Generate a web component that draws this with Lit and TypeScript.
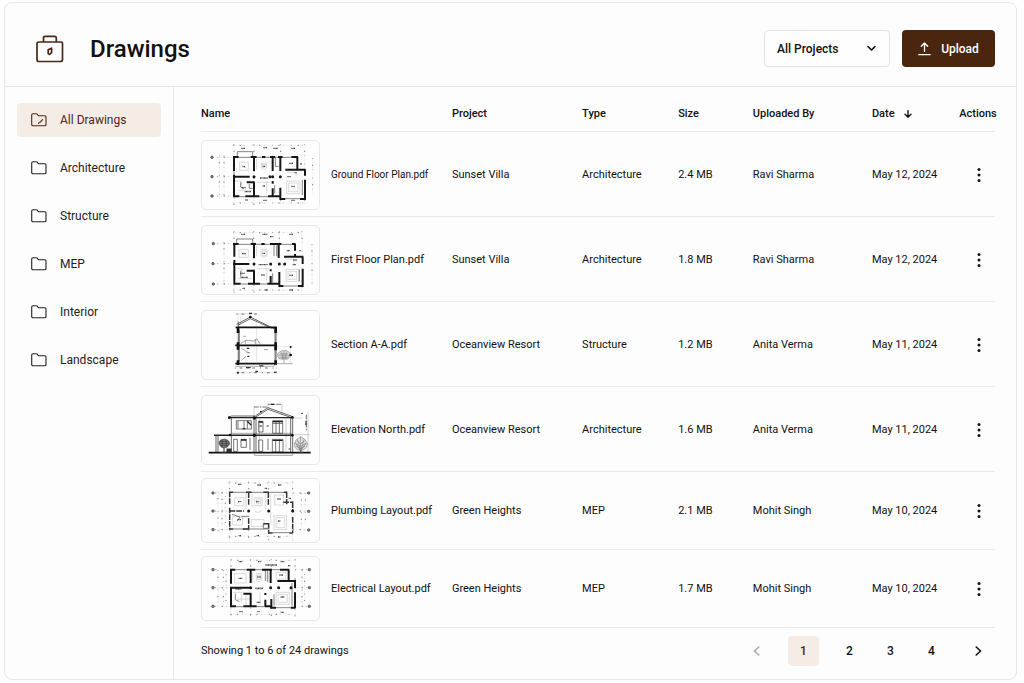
import { LitElement, html, svg, css } from "lit";
import { customElement, property, state } from "lit/decorators.js";

interface Plan {
  walls: string;
  fine: string;
  rooms: string;
  labels: string;
  guides: string;
  dots: number[][];
  marks: number[][];
  light?: boolean;
}

// Plan geometry is drawn on a 351 x 204 sheet that starts at 18,18.
const plans: Record<string, Plan> = {
  ground: {
    walls: "M111 66H128M114 63V108M114 119V187M111 125H161M111 184H130M148 184H190M164 66H182M174 66V108M174 142V186M152 142H176M198 66H208M222 66H237M230 66V108M246 66H260M253 66V108M286 66H306M304 66V107M268 104H329M327 104V122M327 134V194M330 192H312M268 192H251M253 158V194M216 184H256M230 138V146M230 160V186",
    fine: "M124 66V50H170V66M128 67H164M182 67H246M260 67H286M130 185H148M190 185H216M268 191H312M238 66V94H248M114 107V120M160 147V160H170M134 142V156L144 162M236 150V176M319 135V180",
    rooms: "M131 82H157V106H131ZM136 88L152 100M272 138H312V176H272ZM278 144H306V170H278ZM118 138H136V160M196 84H212V98Q204 108 196 98ZM199 88H209V97H199ZM270 112H300V124M182 72V104M212 140V176M183 142H222M128 166H168",
    labels: "M140 95H147M200 94H208M192 129H216M200 153H208M286 154H296M274 125H284M296 113H302M138 158H150M146 170H166M280 85H292M136 40H148M202 38H214M286 40H298M202 196H212M286 196H296M148 195H156M232 40H246M315 84V90",
    guides: "M112 31H328M112 204H328M64 67H112M64 125H112M64 183H112M84 62V190M70 62V190M114 28V62M174 28V62M254 28V62M326 28V100M114 188V210M174 188V210M254 196V210M326 196V210M350 70V182M174 108V142",
    dots: [[174, 125], [230, 125], [253, 125], [222, 125]],
    marks: [[48, 67], [48, 125], [48, 183]],
  },
  first: {
    walls: "M111 72H128M115 70V110M115 120V194M111 132H160M113 191H134M156 191H192M164 72H180M174 72V114M174 152V193M152 152H176M196 72H206M222 72H256M248 72V114M288 72H299M297 72V92M297 102V110M264 110H322M320 110V132M320 146V200M322 198H306M262 198H247M250 156V200M214 191H252M224 148V154M224 168V193",
    fine: "M122 72V57H170V72M128 73H164M180 73H222M256 73H288M134 192H156M192 192H214M262 198H306M234 72V108M242 76V108M134 152V170M230 160V188M310 148V184",
    rooms: "M129 88H157V112H129ZM135 92L150 108M270 148H308V184H270ZM276 154H302V178H276ZM118 146H138V176M195 88H213V108Q204 116 195 108ZM199 92H210V106H199ZM268 118H294V132M182 78V108M212 144V180M184 146H220M128 176H168",
    labels: "M138 101H149M200 100H208M188 134H216M196 165H206M280 166H292M272 92H282M290 134H300M132 160H146M134 172H156M136 43H148M200 43H214M280 43H292M206 210H216M280 210H292M140 205H148M222 50H232M310 92H315M292 120H302",
    guides: "M112 38H320M112 210H320M64 71H112M64 131H112M64 192H112M84 66V196M114 34V70M173 34V70M250 34V70M318 34V108M114 196V218M174 196V218M250 200V218M318 200V218M348 72V196M174 114V152",
    dots: [[174, 132], [224, 132], [250, 132], [266, 132]],
    marks: [[52, 71], [51, 131], [52, 192]],
  },
  plumbing: {
    walls: "M99 58H112M101 56V94M101 104V170M101 114H144M99 168H112M140 168H160M150 58H168M158 58V96M158 136V170M202 58H218M217 58V96M264 58H274M272 58V94M262 88H292M290 88V118M290 132V180M290 180H280M230 180H216M218 150V180M202 152H218",
    fine: "M112 58H264M112 168H216M230 179H280M136 130H160M202 152V166H216M108 124L132 132L124 144",
    rooms: "M116 74H144V98H116ZM176 74H198V98H176ZM182 78H194V92H182ZM236 66H262V96H236ZM234 128H272V170H234ZM240 134H266V164H240ZM110 130H140V156H110ZM174 112Q186 124 198 112M166 140H204V160H166ZM208 62V110M168 62V104M150 60V108M224 62V150",
    labels: "M126 86H136M180 86H190M124 140H136M246 144H254M244 78H254M126 34H136M184 36H196M246 36H256M128 188H136M182 188H190M246 192H254M206 46H214M278 76H286",
    guides: "M98 30H290M98 190H290M58 60H98M58 114H98M58 170H98M66 56V176M78 58V170M88 70V150M101 26V56M158 26V56M218 26V56M290 26V86M101 172V202M158 172V202M218 180V202M290 182V202M316 60V168M328 60V150M292 60H338M292 114H338M292 170H338",
    dots: [[158, 114], [218, 114], [290, 114]],
    marks: [[51, 60], [51, 114], [51, 170], [338, 60], [338, 115], [338, 171]],
    light: true,
  },
  electrical: {
    walls: "M102 56H118M105 54V98M105 108V168M102 110H162M102 166H120M142 166H182M152 56H178M164 56V96M164 126V168M142 128H166M198 56H228M224 56V96M252 56H280M278 56V92M244 90H298M297 86V112M297 124V172M298 170H284M240 170H222M226 144V172M206 166H228M208 126V132M208 146V166",
    fine: "M118 56H152M178 56H198M228 56H252M120 167H142M182 167H206M240 170H284M208 56V90M214 60V92M118 128V146L130 152M234 130V164M288 96V164",
    rooms: "M116 68H150V96H116ZM181 68H197V88Q189 98 181 88ZM185 72H193V86H185ZM240 124H280V160H240ZM246 130H274V154H246ZM110 124H136V154M176 110H204M180 116H200M240 64H270V84H240ZM170 62V94M218 62V94M150 132V162M192 124V160M124 144H160",
    labels: "M128 82H140M184 78H194M178 112H202M254 138H266M250 72H262M118 114H136M128 32H140M186 32H196M254 32H266M130 182H140M184 182H192M254 184H264M208 42H244M276 44H284M182 154H194",
    guides: "M104 28H298M104 190H298M58 56H100M58 110H100M58 166H100M66 58V168M82 58V168M90 70V150M105 24V54M164 24V54M226 24V54M297 24V84M105 170V196M164 170V196M226 172V196M297 174V196M318 58V166M326 70V150M298 56H340M298 110H340M298 166H340",
    dots: [[164, 110], [224, 110], [248, 110], [285, 110]],
    marks: [[51, 56], [51, 110], [51, 166], [340, 56], [340, 110], [340, 166]],
  },
};

const drawPlan = (p: Plan) => svg`
  <g fill="none" stroke="#222">
    <path d=${p.guides} stroke="#ddd" stroke-width="1"/>
    <path d=${p.guides} stroke="#666" stroke-width="2.4" stroke-dasharray="2 17 4 11 1 23"/>
    <path d=${p.rooms} stroke="#bbb" stroke-width="1.6"/>
    <path d=${p.fine} stroke="#555" stroke-width="2.2"/>
    <path d=${p.labels} stroke="#444" stroke-width="4" stroke-dasharray="3 1"/>
    <path d=${p.walls} stroke=${p.light ? "#333" : "#161616"} stroke-width=${p.light ? 4.5 : 6} stroke-dasharray=${p.light ? "17 3" : "none"}/>
  </g>
  ${p.dots.map(([x, y]) => svg`<circle cx=${x} cy=${y} r="4.5" fill="#161616"/>`)}
  ${p.marks.map(([x, y]) => svg`<circle cx=${x} cy=${y} r="4" fill="#777" stroke="#444" stroke-width="1.6"/>`)}`;

const drawSection = () => svg`
  <g fill="none" stroke="#222">
    <path d="M126 24V204M240 50V204M120 27H182M116 203H244M182 40V170M242 125H290M284 122V178M134 34V58" stroke="#c8c8c8" stroke-width="1.4"/>
    <path d="M122 27H186M122 203H244M116 189H240" stroke="#555" stroke-width="2.5" stroke-dasharray="3 12 8 15"/>
    <path d="M122 58L163 36L236 72M127 60L163 41L228 70" stroke="#444" stroke-width="2.4"/>
    <path d="M127 50V176M130 74V170M237 72V176M240 76V170" stroke="#333" stroke-width="2"/>
    <path d="M119 67H242M118 121H242M118 176H242" stroke="#111" stroke-width="5"/>
    <path d="M126 66V84M126 112V134M239 66V84M239 112V136M126 166V180M239 166V180" stroke="#111" stroke-width="8"/>
    <path d="M134 116L150 106L176 108L182 101L192 116M142 94H150M136 166L150 154M136 130L160 144M152 143H162M204 134H216M148 107V116M178 102V118" stroke="#777" stroke-width="2"/>
    <path d="M150 188H164M190 183H202M178 199H186M234 202H242M159 25H168M152 130H160M154 154H160" stroke="#333" stroke-width="4"/>
    <path d="M118 184H234L242 176H290" stroke="#888" stroke-width="2"/>
    <path d="M243 151Q250 137 265 136Q281 138 284 149L276 162H250Z" fill="#ddd" stroke="#888" stroke-width="2"/>
    <path d="M264 138V175M256 142L262 162M272 142L266 162M246 151H282M250 157H278M252 146H276M259 148V164M270 148V164" stroke="#888" stroke-width="1.8"/>
  </g>
  <g fill="#111"><circle cx="163" cy="36" r="4"/><circle cx="284" cy="150" r="4"/><circle cx="284" cy="126" r="3"/><circle cx="126" cy="203" r="3"/></g>`;

const drawElevation = () => svg`
  <g fill="none" stroke="#333">
    <path d="M174 50V84M216 40V60M258 42V74M336 68V186M290 134H342M290 84H320M190 84V186M270 84V186" stroke="#aaa" stroke-width="1.6"/>
    <path d="M174 51H216M216 43H258M331 74V122" stroke="#555" stroke-width="2.4" stroke-dasharray="14 3 5 3"/>
    <path d="M98 82L107 78H178L216 53L290 80M178 82L216 58L284 82" stroke-width="2.2"/>
    <path d="M98 83H292" stroke="#222" stroke-width="4"/>
    <path d="M54 136H176M174 136H292" stroke="#222" stroke-width="4.5"/>
    <path d="M106 130H290" stroke="#777" stroke-width="2"/>
    <path d="M106 84V186M174 84V186M180 84V186M284 84V186M290 84V186M60 138V186M66 138V186" stroke-width="2.2"/>
    <path d="M121 92H166V117H121ZM126 94V116M144 94V116M154 94V116M188 94H201V126H188ZM230 92H260V130H230ZM240 92V130M250 92V130M230 100H260M113 148H124V184H113ZM135 148H151V172H135ZM188 150H200V184H188ZM229 148H261V186H229ZM239 148V186M250 148V186M162 144V180M216 146V180" stroke="#444" stroke-width="2.2"/>
    <path d="M230 95H260M230 151H260M135 150H151M188 96H201M154 94L166 106" stroke="#222" stroke-width="4"/>
    <path d="M190 108H198M212 108H218M140 116H148M330 94V106M225 43H234M192 65H198M316 70H320M278 177H282" stroke="#222" stroke-width="3.5"/>
    <path d="M38 188H344" stroke="#111" stroke-width="5"/>
    <path d="M176 190V196H290V190" stroke="#777" stroke-width="2"/>
    <path d="M84 160V187M76 187H92M314 150V187M306 187H324" stroke="#333" stroke-width="3"/>
    <path d="M69 158Q70 149 84 147Q99 149 101 160Q99 172 84 174Q70 171 69 158Z" fill="#777" stroke="#444" stroke-width="2"/>
    <path d="M71 154H99M70 160H100M73 166H97M78 150V172M91 150V172" stroke="#333" stroke-width="1.6"/>
    <path d="M314 140Q328 146 334 160Q334 174 321 180H306Q294 174 295 160Q300 146 314 140Z" fill="#e0e0e0" stroke="#888" stroke-width="2"/>
    <path d="M314 184L298 158M314 184L304 148M314 184V142M314 184L324 148M314 184L331 158M300 168L314 176L328 168M298 160L314 170L330 160M303 152L314 162L326 152" stroke="#777" stroke-width="1.8"/>
    <path d="M92 176H106V187H92Z" fill="#333"/>
  </g>
  <g fill="#111"><circle cx="100" cy="83" r="4"/><circle cx="175" cy="84" r="5"/><circle cx="289" cy="82" r="4"/><circle cx="102" cy="135" r="4"/><circle cx="175" cy="136" r="5"/><circle cx="289" cy="136" r="4"/></g>`;

@customElement("drawing-thumb")
class DrawingThumb extends LitElement {
  @property() kind = "ground";

  static styles = css`
    :host {
      display: block;
      box-sizing: border-box;
      border: 1px solid #e8e8e8;
      border-radius: 5px;
      background: #fefefe;
      overflow: hidden;
    }
    svg { display: block; width: 100%; height: 100%; }
  `;

  render() {
    const art =
      this.kind === "section" ? drawSection()
      : this.kind === "elevation" ? drawElevation()
      : drawPlan(plans[this.kind]);
    const short = this.kind === "plumbing" || this.kind === "electrical";
    return html`<svg viewBox=${short ? "18 18 351 189" : "18 18 351 204"} aria-hidden="true">${art}</svg>`;
  }
}

interface Drawing {
  name: string;
  project: string;
  type: string;
  size: string;
  by: string;
  date: string;
  kind: string;
  compact?: boolean;
  smallName?: boolean;
}

const drawings: Drawing[] = [
  { name: "Ground Floor Plan.pdf", project: "Sunset Villa", type: "Architecture", size: "2.4 MB", by: "Ravi Sharma", date: "May 12, 2024", kind: "ground", smallName: true },
  { name: "First Floor Plan.pdf", project: "Sunset Villa", type: "Architecture", size: "1.8 MB", by: "Ravi Sharma", date: "May 12, 2024", kind: "first" },
  { name: "Section A-A.pdf", project: "Oceanview Resort", type: "Structure", size: "1.2 MB", by: "Anita Verma", date: "May 11, 2024", kind: "section" },
  { name: "Elevation North.pdf", project: "Oceanview Resort", type: "Architecture", size: "1.6 MB", by: "Anita Verma", date: "May 11, 2024", kind: "elevation" },
  { name: "Plumbing Layout.pdf", project: "Green Heights", type: "MEP", size: "2.1 MB", by: "Mohit Singh", date: "May 10, 2024", kind: "plumbing", compact: true },
  { name: "Electrical Layout.pdf", project: "Green Heights", type: "MEP", size: "1.7 MB", by: "Mohit Singh", date: "May 10, 2024", kind: "electrical", compact: true },
];

const folders = ["All Drawings", "Architecture", "Structure", "MEP", "Interior", "Landscape"];

const folderIcon = (marked: boolean) => html`
  <svg class="folder" viewBox="0 0 16 14" aria-hidden="true">
    <path d="M.7 2V11.4Q.7 12.7 2 12.7H13.8Q15 12.7 15 11.4V4Q15 2.8 13.8 2.8H7.6L6.2 1.2Q5.8.8 5.2.8H2Q.7.8.7 2Z" />
    ${marked ? svg`<path d="M7.6 10.6L8.2 9.2M9.2 9.2L11.6 6.6"/>` : ""}
  </svg>`;

@customElement("app-root")
class AppRoot extends LitElement {
  @state() private folder = "All Drawings";
  @state() private page = 1;

  static styles = css`
    :host {
      display: block;
      box-sizing: border-box;
      min-height: 100vh;
      padding: 2px 7px 3px 4px;
      background: #fefefe;
      color: #111;
      font: 400 11px/16px Roboto, sans-serif;
    }
    * { box-sizing: border-box; }
    button, select { font: inherit; color: inherit; cursor: pointer; }
    button { border: 0; background: none; padding: 0; }
    svg { fill: none; stroke: currentColor; stroke-linecap: round; stroke-linejoin: round; flex: none; }
    .card {
      display: flex;
      flex-direction: column;
      min-height: calc(100vh - 5px);
      border: 1px solid #e8e8e8;
      border-radius: 8px;
      background: #fdfdfd;
    }
    .top {
      display: flex;
      align-items: center;
      height: 84px;
      padding: 8px 21px 0 31px;
      border-bottom: 1px solid #e6e6e6;
    }
    .logo { width: 28px; height: 28px; color: #4a2815; stroke-width: 1.7; }
    h1 { margin: 0 auto 0 26px; font-size: 24px; line-height: 28px; font-weight: 500; }
    .picker { position: relative; display: flex; margin-right: 12px; }
    .picker select {
      appearance: none;
      width: 126px;
      height: 37px;
      padding: 0 32px 0 12px;
      border: 1px solid #e2e2e2;
      border-radius: 4px;
      background: #fefefe;
      font-size: 12px;
      font-weight: 500;
    }
    .picker svg { position: absolute; right: 14px; top: 15px; width: 9px; height: 7px; stroke-width: 1.6; pointer-events: none; }
    .upload {
      display: flex;
      align-items: center;
      justify-content: center;
      gap: 10px;
      width: 93px;
      height: 37px;
      border-radius: 4px;
      background: #4a260f;
      color: #fff;
      font-size: 12px;
      font-weight: 500;
    }
    .upload svg { width: 13px; height: 14px; stroke-width: 1.3; }
    .body { display: flex; flex: 1; }
    nav {
      display: flex;
      flex-direction: column;
      gap: 14px;
      width: 169px;
      flex: none;
      padding: 16px 12px;
      border-right: 1px solid #e8e8e8;
    }
    nav a {
      display: flex;
      align-items: center;
      gap: 13px;
      height: 34px;
      padding: 0 14px;
      border-radius: 4px;
      color: #222;
      font-size: 12px;
      text-decoration: none;
    }
    nav a.current { background: #f6ece6; color: #4a2815; }
    .folder { width: 16px; height: 14px; stroke-width: 1.1; }
    main { flex: 1; min-width: 0; padding: 0 21px 0 27px; }
    table { width: 100%; border-collapse: separate; border-spacing: 0; table-layout: fixed; }
    th, td { padding: 0; text-align: left; white-space: nowrap; border-bottom: 1px solid #ebebeb; }
    th { height: 45px; padding-top: 9px; font-weight: 500; }
    td { height: 85px; padding-top: 1px; }
    .compact td { height: 78px; padding-top: 0; }
    .c-name { width: 31.6%; }
    .c-project { width: 16.4%; }
    .c-type { width: 12.1%; }
    .c-size { width: 9.4%; }
    .c-by { width: 15%; }
    .c-date { width: 11%; }
    .file { display: flex; align-items: center; gap: 11px; }
    .small { font-size: 10px; }
    drawing-thumb { width: 119px; height: 70px; flex: none; }
    .compact drawing-thumb { height: 65px; }
    .sort { display: flex; align-items: center; gap: 9px; }
    .sort svg { width: 8px; height: 8px; stroke-width: 1.4; }
    .more { display: block; width: 16px; height: 20px; margin-left: 12px; }
    .more svg { display: block; width: 16px; height: 20px; fill: #111; stroke: none; }
    .foot { display: flex; align-items: center; justify-content: space-between; height: 46px; }
    .pages { display: flex; align-items: center; gap: 10px; font-size: 12px; font-weight: 500; }
    .pages button { display: flex; align-items: center; justify-content: center; width: 31px; height: 30px; border-radius: 4px; }
    .pages button.current { background: #f6ece6; color: #4a2815; }
    .pages svg { width: 7px; height: 10px; stroke-width: 1.6; }
    .pages .prev { margin-right: 6px; color: #aaa; }
    .pages .prev + button { margin-right: 5px; }
    .pages .next { margin: 0 1px 0 6px; }
  `;

  render() {
    return html`
      <div class="card">
        <header class="top">
          <svg class="logo" viewBox="0 0 28 28" aria-hidden="true">
            <path d="M3 7H25Q26.5 7 26.5 8.5V24.5Q26.5 26.5 24.5 26.5H3Q1 26.5 1 24.5V8.5Q1 7 3 7ZM7.5 7V3Q7.5 1.3 9.2 1.3H18.6Q20.3 1.3 20.3 3V7" />
            <path d="M12.2 14.8L15.6 13.2V17.6L13.6 19.4L12.2 18.6Z" />
          </svg>
          <h1>Drawings</h1>
          <div class="picker">
            <select aria-label="Project"><option>All Projects</option><option>Sunset Villa</option><option>Oceanview Resort</option><option>Green Heights</option></select>
            <svg viewBox="0 0 9 7" aria-hidden="true"><path d="M1 1.5L4.5 5L8 1.5" /></svg>
          </div>
          <button class="upload">
            <svg viewBox="0 0 13 14" aria-hidden="true"><path d="M6.5 9.4V1.2M3.3 4.2L6.5 1L9.7 4.2M.8 12.7H12.2" /></svg>
            Upload
          </button>
        </header>
        <div class="body">
          <nav aria-label="Folders">
            ${folders.map((f) => html`
              <a href="#" class=${f === this.folder ? "current" : ""} @click=${(e: Event) => { e.preventDefault(); this.folder = f; }}>
                ${folderIcon(f === "All Drawings")}<span>${f}</span>
              </a>`)}
          </nav>
          <main>
            <table>
              <thead>
                <tr>
                  <th class="c-name">Name</th>
                  <th class="c-project">Project</th>
                  <th class="c-type">Type</th>
                  <th class="c-size">Size</th>
                  <th class="c-by">Uploaded By</th>
                  <th class="c-date">
                    <button class="sort">Date <svg viewBox="0 0 8 8" aria-hidden="true"><path d="M4 .8V7.2M1 4.3L4 7.3L7 4.3" /></svg></button>
                  </th>
                  <th>Actions</th>
                </tr>
              </thead>
              <tbody>
                ${drawings.map((d) => html`
                  <tr class=${d.compact ? "compact" : ""}>
                    <td><div class="file"><drawing-thumb kind=${d.kind}></drawing-thumb><span class=${d.smallName ? "small" : ""}>${d.name}</span></div></td>
                    <td>${d.project}</td>
                    <td>${d.type}</td>
                    <td>${d.size}</td>
                    <td>${d.by}</td>
                    <td>${d.date}</td>
                    <td>
                      <button class="more" aria-label="Actions for ${d.name}">
                        <svg viewBox="0 0 16 20"><circle cx="8" cy="4.5" r="1.5"/><circle cx="8" cy="10" r="1.5"/><circle cx="8" cy="15.5" r="1.5"/></svg>
                      </button>
                    </td>
                  </tr>`)}
              </tbody>
            </table>
            <div class="foot">
              <span>Showing 1 to 6 of 24 drawings</span>
              <div class="pages">
                <button class="prev" aria-label="Previous page"><svg viewBox="0 0 7 10"><path d="M5.8 1L1.4 5L5.8 9" /></svg></button>
                ${[1, 2, 3, 4].map((n) => html`<button class=${n === this.page ? "current" : ""} @click=${() => (this.page = n)}>${n}</button>`)}
                <button class="next" aria-label="Next page"><svg viewBox="0 0 7 10"><path d="M1.2 1L5.6 5L1.2 9" /></svg></button>
              </div>
            </div>
          </main>
        </div>
      </div>`;
  }
}
